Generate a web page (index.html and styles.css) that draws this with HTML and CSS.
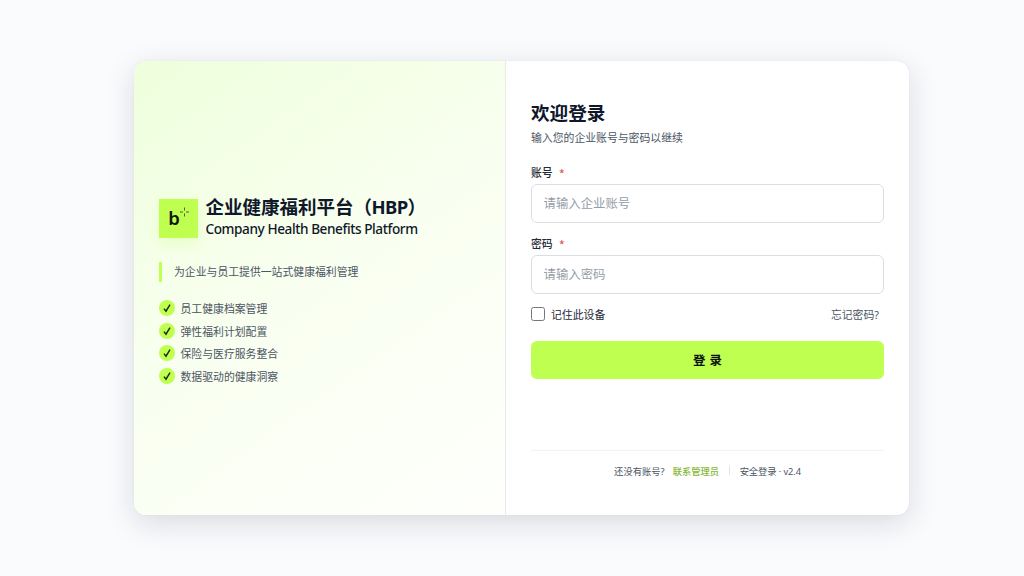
FILE: index.html
```html
<!DOCTYPE html>
<html lang="zh-CN">
<head>
  <meta charset="UTF-8">
  <title>企业健康福利平台（HBP）</title>
  <link rel="stylesheet" href="styles.css">
</head>
<body>
  <main class="card">
    <section class="intro">
      <div class="brand">
        <svg class="logo" viewBox="0 0 39 39" aria-hidden="true">
          <rect width="39" height="39" fill="#bfff50"/>
          <text x="9.3" y="26">b</text>
          <path d="M25.5 8.5v3M25.5 14.5v3M21 13h3M27 13h3" stroke="#4a622c" stroke-width="1" fill="none"/>
        </svg>
        <div class="brand-text">
          <h1>企业健康福利平台<span class="abbr">（HBP）</span></h1>
          <p>Company Health Benefits Platform</p>
        </div>
      </div>
      <p class="tagline">为企业与员工提供一站式健康福利管理</p>
      <ul class="features">
        <li><svg class="tick" viewBox="0 0 16 16"><path d="M5 8.6l2 2.6 4-6.5"/></svg>员工健康档案管理</li>
        <li><svg class="tick" viewBox="0 0 16 16"><path d="M5 8.6l2 2.6 4-6.5"/></svg>弹性福利计划配置</li>
        <li><svg class="tick" viewBox="0 0 16 16"><path d="M5 8.6l2 2.6 4-6.5"/></svg>保险与医疗服务整合</li>
        <li><svg class="tick" viewBox="0 0 16 16"><path d="M5 8.6l2 2.6 4-6.5"/></svg>数据驱动的健康洞察</li>
      </ul>
    </section>

    <section class="login">
      <h2>欢迎登录</h2>
      <p class="hint">输入您的企业账号与密码以继续</p>
      <form>
        <div class="form-row">
          <label class="field-label" for="account">账号<span class="required">*</span></label>
          <input class="field" id="account" type="text" placeholder="请输入企业账号">
        </div>
        <div class="form-row">
          <label class="field-label" for="password">密码<span class="required">*</span></label>
          <input class="field" id="password" type="password" placeholder="请输入密码">
        </div>
        <div class="options">
          <label class="remember"><input type="checkbox">记住此设备</label>
          <a class="forgot" href="#">忘记密码?</a>
        </div>
        <button class="submit" type="button">登 录</button>
      </form>
      <footer class="footer">
        <span>还没有账号?</span>
        <a href="#">联系管理员</a>
        <i class="separator"></i>
        <span class="version">安全登录 · v2.4</span>
      </footer>
    </section>
  </main>
</body>
</html>
```
FILE: styles.css
```css
* { box-sizing: border-box; }
body {
  margin: 0;
  height: 576px;
  padding: 61px 0 0 134px;
  overflow: hidden;
  background: #fafbfd;
  color: #0f172a;
  font-family: "Noto Sans", "Noto Sans CJK SC", sans-serif;
}
h1, h2, p, ul { margin: 0; padding: 0; }
a { text-decoration: none; }

.card {
  display: flex;
  width: 775px;
  height: 454px;
  border-radius: 12px;
  background: #fff;
  overflow: hidden;
  box-shadow: 0 8px 30px rgba(15, 23, 42, 0.14), 0 0 1px rgba(15, 23, 42, 0.15);
}

/* left side */
.intro {
  width: 372px;
  padding: 134px 25px 0;
  border-right: 1px solid #e8ece9;
  background: linear-gradient(145deg, #eeffdc 0%, #f9fff0 48%, #fefffc 100%);
}
.brand { display: flex; gap: 7.5px; }
.logo {
  width: 39px;
  height: 39px;
  margin-top: 4px;
  box-shadow: 0 6px 14px rgba(191, 255, 80, 0.22);
}
.logo text { font: 600 18.5px "Noto Sans", sans-serif; fill: #10180c; }
.brand-text { white-space: nowrap; }
h1 { font-size: 18.5px; line-height: 24px; }
.abbr { letter-spacing: -0.6px; }
.brand-text p {
  font-size: 13.6px;
  font-weight: 500;
  letter-spacing: -0.42px;
  line-height: 20px;
}
.tagline {
  margin-top: 23px;
  padding-left: 12px;
  border-left: 3px solid #bfff50;
  color: #4b5563;
  font-size: 10.85px;
  line-height: 20px;
}
.features {
  display: grid;
  gap: 6.5px;
  margin-top: 18px;
  list-style: none;
  color: #4b5563;
  font-size: 10.85px;
}
.features li { display: flex; align-items: center; gap: 5.5px; height: 16px; }
.tick {
  width: 16px;
  height: 16px;
  border-radius: 50%;
  background: #bfff50;
  fill: none;
  stroke: #1a2410;
  stroke-width: 1.4;
}

/* right side */
.login {
  display: flex;
  flex: 1;
  flex-direction: column;
  padding: 37px 25px 0;
}
h2 { font-size: 18.6px; line-height: 30px; }
.hint { color: #4b5563; font-size: 10.85px; line-height: 20px; }
form { padding-top: 17px; }
.form-row + .form-row { margin-top: 13.5px; }
.field-label {
  display: block;
  height: 16px;
  color: #1f2937;
  font-size: 10.85px;
  font-weight: 500;
  line-height: 16px;
}
.required {
  margin-left: 6.5px;
  color: #d05050;
  font-size: 9.3px;
  line-height: 1;
  vertical-align: 1px;
}
.field {
  display: block;
  width: 100%;
  height: 38.5px;
  margin-top: 3px;
  padding: 0 11.5px;
  border: 1px solid #d9dee5;
  border-radius: 6px;
  background: #fff;
  font: 12.4px "Noto Sans", "Noto Sans CJK SC", sans-serif;
}
.field::placeholder { color: #969da9; }
.options {
  display: flex;
  align-items: center;
  justify-content: space-between;
  height: 16px;
  margin-top: 12.5px;
  padding-right: 5px;
  font-size: 10.85px;
}
.remember { display: flex; align-items: center; gap: 6px; color: #1f2937; }
.remember input {
  width: 14px;
  height: 14px;
  margin: 0;
}
.forgot { color: #4b5563; }
.submit {
  display: block;
  width: 100%;
  height: 37.5px;
  margin-top: 19px;
  border: 0;
  border-radius: 6px;
  background: #bfff50;
  color: #0b1208;
  font: bold 12.4px "Noto Sans", "Noto Sans CJK SC", sans-serif;
  word-spacing: 1px;
}
.footer {
  display: flex;
  align-items: center;
  justify-content: center;
  height: 40px;
  margin-top: 71.5px;
  border-top: 1px solid #f1f3f5;
  color: #4b5563;
  font-size: 9.3px;
}
.footer a { margin-left: 8px; color: #84b934; font-weight: 500; }
.separator {
  width: 1px;
  height: 9px;
  margin: 0 9.5px 0 10px;
  background: #e2e6ea;
}
.version { letter-spacing: -0.1px; }
```
